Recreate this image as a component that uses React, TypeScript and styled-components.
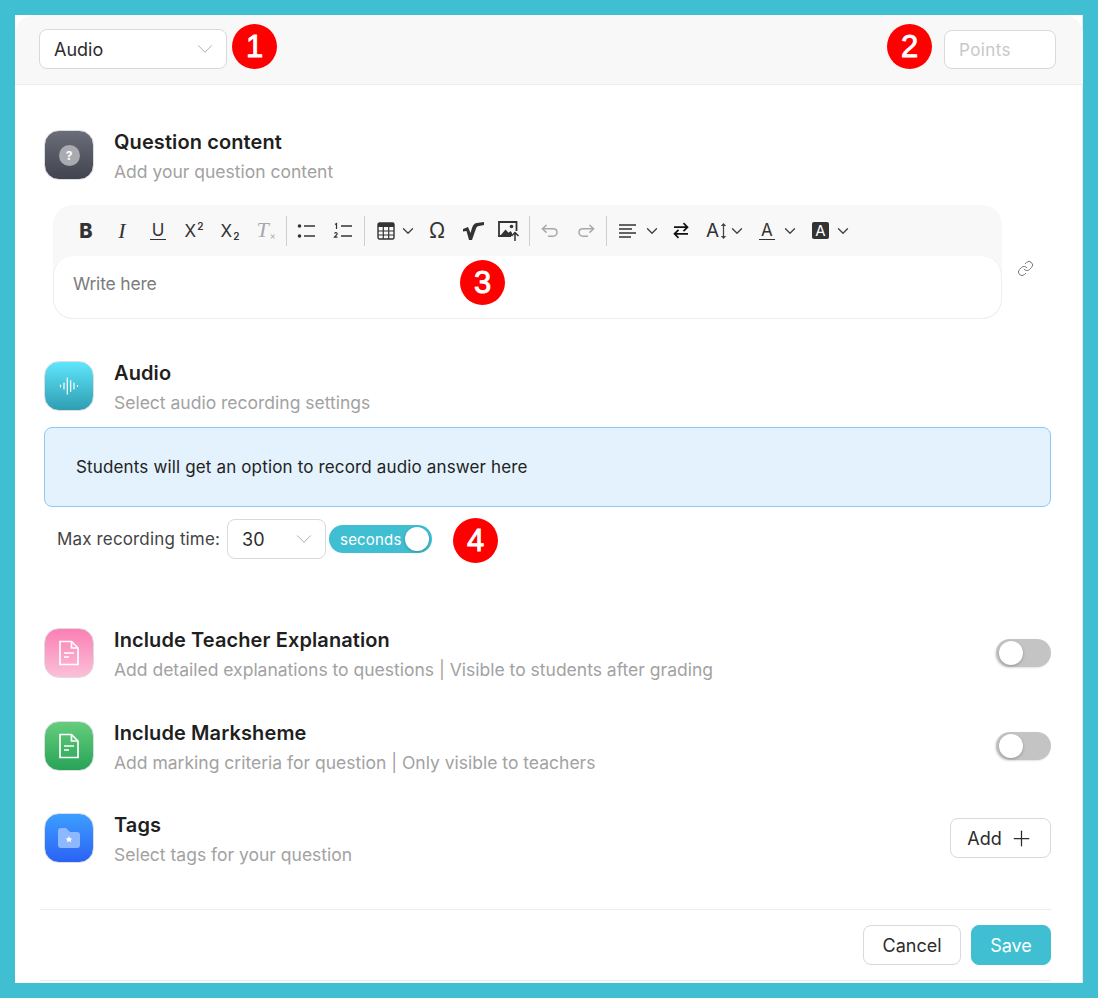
import React from 'react';
import styled, { createGlobalStyle } from 'styled-components';
import { Plus, Link as LinkIcon, ChevronDown } from 'lucide-react';

const GlobalStyle = createGlobalStyle`
  html, body { margin: 0; padding: 0; background: #40bfd2; }
  body { font-family: Inter, "Noto Sans", sans-serif; color: #222; }
  * { box-sizing: border-box; }
`;

// -------- page shell ---------- //
const Page = styled.div`
  width: 1098px;
  height: 998px;
  padding: 15px;
  background: #40bfd2;
  overflow: hidden;
`;

const Panel = styled.div`
  position: relative;
  height: 968px;
  background: #fff;
  box-shadow: inset -1px 0 0 #e8e8e8;
`;

const Header = styled.div`
  height: 70px;
  padding: 14px 27px 0 24px;
  display: flex;
  justify-content: space-between;
  align-items: flex-start;
  background: #f8f8f8;
  border-bottom: 1px solid #ececec;
  border-radius: 20px 20px 0 0;
`;

const Select = styled.div<{ $w: number }>`
  width: ${(p) => p.$w}px;
  height: 40px;
  padding: 0 8px 0 14px;
  display: flex;
  align-items: center;
  justify-content: space-between;
  background: #fff;
  border: 1px solid #d9d9d9;
  border-radius: 8px;
  font-size: 18px;
  color: #2c2c2c;
`;

const Points = styled.div`
  width: 112px;
  height: 39px;
  margin-top: 1px;
  padding: 0 14px;
  display: flex;
  align-items: center;
  background: #fff;
  border: 1px solid #d9d9d9;
  border-radius: 8px;
  font-size: 17px;
  letter-spacing: 0.4px;
  color: #c8c8c8;
`;

const Badge = styled.div<{ $x: number; $y: number }>`
  position: absolute;
  left: ${(p) => p.$x}px;
  top: ${(p) => p.$y}px;
  width: 45px;
  height: 45px;
  display: flex;
  align-items: center;
  justify-content: center;
  border-radius: 50%;
  background: #fe0000;
  color: #fff;
  font-family: "Liberation Sans", Arial, sans-serif;
  font-size: 31px;
  -webkit-text-stroke: 0.9px #fff;
`;

const Body = styled.div`
  padding: 45px 32px 0 29px;
`;

// -------- section heading ---------- //
const SectionRow = styled.div<{ $mt?: number }>`
  display: flex;
  align-items: flex-start;
  margin-top: ${(p) => p.$mt ?? 0}px;
`;

const Tile = styled.div<{ $from: string; $to: string }>`
  width: 50px;
  height: 50px;
  flex: none;
  display: flex;
  align-items: center;
  justify-content: center;
  border-radius: 15px;
  border: 1px solid #dcdde2;
  background: linear-gradient(180deg, ${(p) => p.$from}, ${(p) => p.$to});
`;

const SectionText = styled.div`
  margin-left: 20px;
  flex: 1;
`;

const Title = styled.div`
  height: 24px;
  line-height: 24px;
  font-size: 20px;
  font-weight: 600;
  letter-spacing: 0.1px;
  color: #1f1f1f;
`;

const Subtitle = styled.div`
  margin-top: 6px;
  height: 24px;
  line-height: 24px;
  font-size: 17.5px;
  color: #a2a2a2;
`;

// -------- editor ---------- //
const EditorRow = styled.div`
  display: flex;
  align-items: center;
  margin: 21px 0 0 9px;
`;

const Editor = styled.div`
  width: 949px;
  height: 114px;
  background: #f8f8f8;
  border-radius: 20px;
`;

const Toolbar = styled.div`
  height: 51px;
  padding-left: 15px;
  display: flex;
  align-items: center;
`;

const Tool = styled.div<{ $off?: boolean }>`
  width: 36px;
  height: 26px;
  flex: none;
  display: flex;
  align-items: center;
  justify-content: center;
  color: ${(p) => (p.$off ? '#a8a8a8' : '#333')};
`;

const Drop = styled.div<{ $w: number; $pl: number; $gap: number }>`
  width: ${(p) => p.$w}px;
  height: 26px;
  padding-left: ${(p) => p.$pl}px;
  flex: none;
  display: flex;
  align-items: center;
  gap: ${(p) => p.$gap}px;
  color: #333;
`;

const Sep = styled.div<{ $mx: number }>`
  width: 1px;
  height: 30px;
  flex: none;
  margin: 0 ${(p) => p.$mx}px;
  background: #cfcfcf;
`;

const Letter = styled.span<{ $serif?: boolean; $bold?: boolean; $size?: number }>`
  font-family: ${(p) => (p.$serif ? '"Liberation Serif", serif' : 'Inter, sans-serif')};
  font-style: ${(p) => (p.$serif ? 'italic' : 'normal')};
  font-weight: ${(p) => (p.$bold ? 800 : 400)};
  font-size: ${(p) => p.$size ?? 19}px;
  line-height: 20px;
`;

const Script = styled.span<{ $up?: boolean }>`
  margin-left: 1px;
  font-size: 10px;
  font-weight: 600;
  line-height: 10px;
  vertical-align: ${(p) => (p.$up ? '7px' : '-3px')};
`;

const Under = styled.span`
  font-size: 17px;
  line-height: 18px;
  border-bottom: 1.5px solid currentColor;
  padding: 0 2px;
`;

const BoxA = styled.span`
  width: 17px;
  height: 17px;
  display: flex;
  align-items: center;
  justify-content: center;
  border-radius: 2px;
  background: #333;
  color: #fff;
  font-size: 15px;
`;

const WriteArea = styled.div`
  height: 63px;
  padding: 0 19px 8px;
  display: flex;
  align-items: center;
  background: #fff;
  border: 1px solid #eeeeee;
  border-top: 0;
  border-radius: 20px;
  font-size: 17.5px;
  letter-spacing: -0.2px;
  color: #7b7b7b;
`;

const LinkSlot = styled.div`
  margin-left: 15px;
  margin-top: 12px;
  color: #777;
  display: flex;
`;

// -------- audio settings ---------- //
const InfoBox = styled.div`
  height: 80px;
  margin-top: 12px;
  padding-left: 31px;
  display: flex;
  align-items: center;
  background: #e3f2fd;
  border: 1px solid #90c8f5;
  border-radius: 8px;
  font-size: 17px;
  letter-spacing: 0.15px;
  color: #222;
`;

const RecordRow = styled.div`
  height: 40px;
  margin: 12px 0 0 13px;
  display: flex;
  align-items: center;
`;

const RecordLabel = styled.span`
  font-size: 17px;
  letter-spacing: 0.15px;
  color: #444;
  margin-right: 7px;
  white-space: nowrap;
`;

const Seconds = styled.div`
  width: 103px;
  height: 28px;
  margin-left: 3px;
  padding: 0 3px 0 11px;
  display: flex;
  align-items: center;
  justify-content: space-between;
  border-radius: 14px;
  background: #40bfd2;
  color: #fff;
  font-size: 15px;
  letter-spacing: 0.2px;
`;

const Knob = styled.span`
  width: 24px;
  height: 24px;
  border-radius: 50%;
  background: #fff;
  box-shadow: 0 1px 3px rgba(0, 0, 0, 0.25);
`;

const Switch = styled.div`
  width: 55px;
  height: 28px;
  margin-top: 11px;
  padding: 2px 3px;
  flex: none;
  border-radius: 14px;
  background: #c4c4c4;
  display: flex;
  box-shadow: -1px 1px 2px rgba(0, 0, 0, 0.12);
`;

const AddButton = styled.div`
  width: 101px;
  height: 40px;
  margin-top: 5px;
  flex: none;
  display: flex;
  align-items: center;
  justify-content: center;
  gap: 7px;
  border: 1px solid #d9d9d9;
  border-radius: 8px;
  font-size: 18px;
  color: #2c2c2c;
`;

// -------- footer ---------- //
const Footer = styled.div`
  margin: 42px 32px 0 25px;
  padding-top: 15px;
  border-top: 1px solid #ececec;
  display: flex;
  justify-content: flex-end;
  gap: 10px;
  height: 72px;
  border-bottom: 1px solid #ececec;
`;

const Button = styled.div<{ $primary?: boolean; $w: number }>`
  width: ${(p) => p.$w}px;
  height: 40px;
  display: flex;
  align-items: center;
  justify-content: center;
  border-radius: 8px;
  font-size: 18px;
  color: ${(p) => (p.$primary ? '#fff' : '#2c2c2c')};
  background: ${(p) => (p.$primary ? '#40bfd2' : '#fff')};
  border: 1px solid ${(p) => (p.$primary ? '#40bfd2' : '#d9d9d9')};
`;

// -------- drawn icons ---------- //
const Chev = () => <ChevronDown size={18} strokeWidth={1.8} color="#444" />;

const SelectChev = () => <ChevronDown size={26} strokeWidth={0.8} color="#a0a0a0" />;

const BulletList = () => (
  <svg width="20" height="16" viewBox="0 0 20 16" fill="none">
    <circle cx="2.5" cy="3" r="1.8" fill="#333" />
    <circle cx="2.5" cy="13" r="1.8" fill="#333" />
    <path d="M7 3h11M7 13h11" stroke="#333" strokeWidth="1.6" />
  </svg>
);

const NumberList = () => (
  <svg width="20" height="18" viewBox="0 0 20 18" fill="none">
    <path d="M2 2.5 3.5 1.5V7" stroke="#333" strokeWidth="1.2" />
    <path d="M1.5 11.5c1-1.5 3-.8 2.6.6-.2.8-1.6 1.7-2.6 3h3" stroke="#333" strokeWidth="1.2" />
    <path d="M8 4h11M8 14h11" stroke="#333" strokeWidth="1.6" />
  </svg>
);

const TableIcon = () => (
  <svg width="18" height="18" viewBox="0 0 18 18" fill="none">
    <rect x="1" y="1" width="16" height="16" rx="1.5" stroke="#333" strokeWidth="1.4" />
    <rect x="1" y="1" width="16" height="4" fill="#333" />
    <path d="M1 9h16M1 13h16M6.3 5v12M11.7 5v12" stroke="#333" strokeWidth="1.2" />
  </svg>
);

const SqrtIcon = () => (
  <svg width="21" height="18" viewBox="0 0 21 18">
    <path d="M0 7 5 5 7.5 11 9 6C10 2.5 12 1 14 1L21 0V3L16 4C14.500 4.300 13.500 5 13 6.500L9 18H6L3.500 9 0 9.500Z" fill="#333" />
  </svg>
);

const ImageUp = () => (
  <svg width="22" height="20" viewBox="0 0 22 20" fill="none">
    <path d="M13 15H1V1h17.500V10" stroke="#333" strokeWidth="1.8" />
    <path d="M2 15l5.500-6.500 3 3.200L12.500 10 14 12v3Z" fill="#333" />
    <circle cx="13.500" cy="5.500" r="1.800" fill="#333" />
    <path d="M17 20V11.500M13.500 15l3.500-3.500 3.500 3.500" stroke="#333" strokeWidth="1.500" />
  </svg>
);

const Undo = () => (
  <svg width="18" height="14" viewBox="0 0 18 14" fill="none" stroke="currentColor" strokeWidth="1.5">
    <path d="M5.500 1 1.500 4.800 5.500 8.600" />
    <path d="M1.500 4.800H12c2.400 0 4 1.600 4 3.600s-1.600 3.800-4 3.800H7" />
  </svg>
);

const Redo = () => (
  <svg width="18" height="14" viewBox="0 0 18 14" fill="none" stroke="currentColor" strokeWidth="1.5">
    <path d="M12.500 1 16.500 4.800 12.500 8.600" />
    <path d="M16.500 4.800H6c-2.400 0-4 1.600-4 3.600s1.600 3.800 4 3.800h5" />
  </svg>
);

const AlignLeft = () => (
  <svg width="18" height="14" viewBox="0 0 18 14" fill="none" stroke="#333" strokeWidth="1.3">
    <path d="M0 1h17M0 5h13M0 9h17M0 13h12" />
  </svg>
);

const Swap = () => (
  <svg width="16" height="17" viewBox="0 0 16 17" fill="none" stroke="#111" strokeWidth="1.7">
    <path d="M1 5.200h13M10.500 1.200l4 4-4 4" />
    <path d="M15 11.800H2M5.500 7.800l-4 4 4 4" />
  </svg>
);

const HeightArrow = () => (
  <svg width="7" height="16" viewBox="0 0 7 18" fill="#444">
    <path d="M3.500 0 6.500 3.500H4.200v11h2.300L3.500 18 .5 14.500h2.300v-11H.5Z" />
  </svg>
);

const Waveform = () => (
  <svg width="20" height="20" viewBox="0 0 20 20" fill="none" stroke="#fff" strokeWidth="1.2" strokeLinecap="round">
    <path d="M1.500 9v2M5 7v6M8.300 2v16M11.700 4.500v11M15 7v6M18.500 9.500v1" />
  </svg>
);

const Doc = () => (
  <svg width="22" height="26" viewBox="0 0 22 26" fill="none" stroke="#fff" strokeWidth="1.700">
    <path d="M2 1.500h11.500L20 8v16.500H2Z" />
    <path d="M13.500 1.500V8H20" />
    <path d="M6 13h10M6 17h5" />
  </svg>
);

const FolderStar = () => (
  <svg width="22" height="20" viewBox="0 0 22 20">
    <path d="M3 0h5l4 4h7a3 3 0 0 1 3 3v10a3 3 0 0 1-3 3H3a3 3 0 0 1-3-3V3a3 3 0 0 1 3-3Z" fill="#8db8ff" />
    <path d="M11 8l1 2.200 2.400.2-1.800 1.600.6 2.400-2.200-1.300-2.200 1.300.6-2.400-1.800-1.600 2.400-.2Z" fill="#fff" />
  </svg>
);

const Question = styled.span`
  width: 21px;
  height: 21px;
  display: flex;
  align-items: center;
  justify-content: center;
  border-radius: 50%;
  background: #a9abb1;
  color: #fff;
  font-size: 12px;
  font-weight: 700;
`;

// -------- main component ---------- //
const App = () => {
  return (
    <Page>
      <GlobalStyle />
      <Panel>
        <Header>
          <Select $w={188}>
            Audio
            <SelectChev />
          </Select>
          <Points>Points</Points>
        </Header>
        <Badge $x={217} $y={9}>1</Badge>
        <Badge $x={872} $y={9}>2</Badge>
        <Badge $x={445} $y={245}>3</Badge>
        <Badge $x={438} $y={503}>4</Badge>

        <Body>
          <SectionRow>
            <Tile $from="#6b6e78" $to="#41444f">
              <Question>?</Question>
            </Tile>
            <SectionText>
              <Title>Question content</Title>
              <Subtitle>Add your question content</Subtitle>
            </SectionText>
          </SectionRow>

          <EditorRow>
            <Editor>
              <Toolbar>
                <Tool><Letter $bold $size={20}>B</Letter></Tool>
                <Tool><Letter $serif $size={22}>I</Letter></Tool>
                <Tool><Under>U</Under></Tool>
                <Tool><Letter $size={17}>X<Script $up>2</Script></Letter></Tool>
                <Tool><Letter $size={17}>X<Script>2</Script></Letter></Tool>
                <Tool $off><Letter $serif $size={22}>T<Script>×</Script></Letter></Tool>
                <Sep $mx={2} />
                <Tool><BulletList /></Tool>
                <Tool><NumberList /></Tool>
                <Sep $mx={3} />
                <Drop $w={51} $pl={9} $gap={4}><TableIcon /><Chev /></Drop>
                <Tool><Letter $size={21}>Ω</Letter></Tool>
                <Tool><SqrtIcon /></Tool>
                <Tool><ImageUp /></Tool>
                <Sep $mx={2} />
                <Tool $off><Undo /></Tool>
                <Tool $off><Redo /></Tool>
                <Sep $mx={2} />
                <Drop $w={54} $pl={10} $gap={6}><AlignLeft /><Chev /></Drop>
                <Tool><Swap /></Tool>
                <Drop $w={50} $pl={7} $gap={1}><Letter>A</Letter><HeightArrow /><Chev /></Drop>
                <Drop $w={52} $pl={10} $gap={6}><Under>A</Under><Chev /></Drop>
                <Drop $w={52} $pl={11} $gap={5}><BoxA>A</BoxA><Chev /></Drop>
              </Toolbar>
              <WriteArea>Write here</WriteArea>
            </Editor>
            <LinkSlot><LinkIcon size={17} strokeWidth={1.4} /></LinkSlot>
          </EditorRow>

          <SectionRow $mt={42}>
            <Tile $from="#5fe6fb" $to="#2f9db2">
              <Waveform />
            </Tile>
            <SectionText>
              <Title>Audio</Title>
              <Subtitle>Select audio recording settings</Subtitle>
            </SectionText>
          </SectionRow>

          <InfoBox>Students will get an option to record audio answer here</InfoBox>

          <RecordRow>
            <RecordLabel>Max recording time:</RecordLabel>
            <Select $w={99}>
              30
              <SelectChev />
            </Select>
            <Seconds>
              seconds
              <Knob />
            </Seconds>
          </RecordRow>

          <SectionRow $mt={69}>
            <Tile $from="#fb7fb4" $to="#fbc0d8">
              <Doc />
            </Tile>
            <SectionText>
              <Title>Include Teacher Explanation</Title>
              <Subtitle>Add detailed explanations to questions | Visible to students after grading</Subtitle>
            </SectionText>
            <Switch><Knob /></Switch>
          </SectionRow>

          <SectionRow $mt={39}>
            <Tile $from="#66cd7c" $to="#27a358">
              <Doc />
            </Tile>
            <SectionText>
              <Title>Include Marksheme</Title>
              <Subtitle>Add marking criteria for question | Only visible to teachers</Subtitle>
            </SectionText>
            <Switch><Knob /></Switch>
          </SectionRow>

          <SectionRow $mt={38}>
            <Tile $from="#3d9eff" $to="#2b62f5">
              <FolderStar />
            </Tile>
            <SectionText>
              <Title>Tags</Title>
              <Subtitle>Select tags for your question</Subtitle>
            </SectionText>
            <AddButton>Add <Plus size={25} strokeWidth={1.2} /></AddButton>
          </SectionRow>
        </Body>

        <Footer>
          <Button $w={98}>Cancel</Button>
          <Button $w={80} $primary>Save</Button>
        </Footer>
      </Panel>
    </Page>
  );
};

export default App;
